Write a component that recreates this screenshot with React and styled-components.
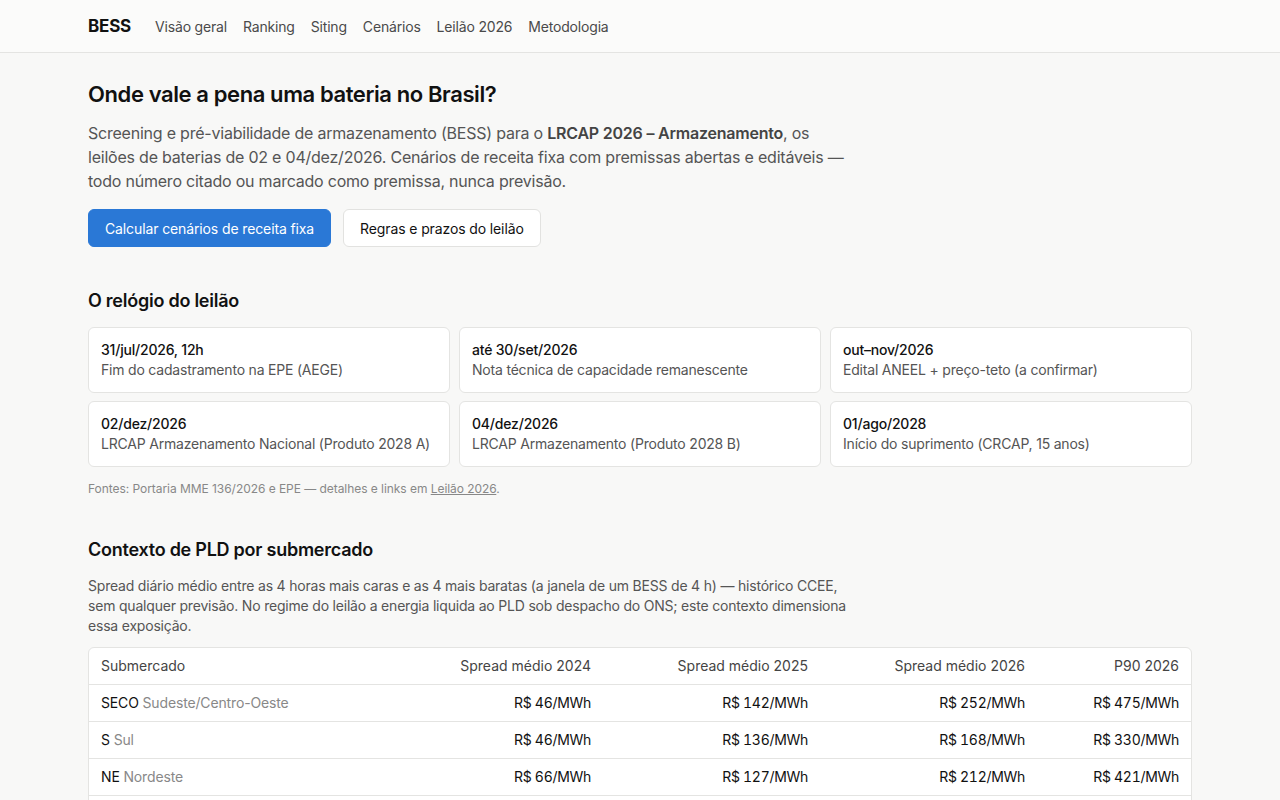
import React from 'react';
import styled, { createGlobalStyle } from 'styled-components';

const GlobalStyle = createGlobalStyle`
  * { box-sizing: border-box; }
  body {
    margin: 0;
    background: #f8f8f7;
    font-family: Inter, "Noto Sans", sans-serif;
    color: #1a1a1a;
  }
`;

const Header = styled.header`
  height: 53px;
  background: #fbfbfa;
  border-bottom: 1px solid #e4e4e2;
`;

const HeaderInner = styled.nav`
  max-width: 1104px;
  margin: 0 auto;
  height: 100%;
  display: flex;
  align-items: center;
  gap: 16px;
`;

const Brand = styled.a`
  font-size: 17px;
  font-weight: 700;
  color: #111;
  margin-right: 8px;
  letter-spacing: -0.2px;
`;

const NavLink = styled.a`
  font-size: 14px;
  color: #4a4a4a;
  letter-spacing: -0.18px;
`;

const Main = styled.main`
  max-width: 1104px;
  margin: 0 auto;
  padding-top: 27px;
`;

const Title = styled.h1`
  margin: 0;
  font-size: 22px;
  font-weight: 600;
  letter-spacing: -0.4px;
  line-height: 28px;
  color: #111;
`;

const Lead = styled.p`
  margin: 13px 0 0;
  max-width: 762px;
  font-size: 16px;
  line-height: 24px;
  letter-spacing: -0.22px;
  color: #555;

  strong { color: #444; font-weight: 600; }
`;

const Actions = styled.div`
  display: flex;
  gap: 12px;
  margin-top: 16px;
`;

const Button = styled.a`
  display: inline-flex;
  align-items: center;
  height: 38px;
  padding: 0 16px;
  border-radius: 6px;
  font-size: 14px;
  letter-spacing: -0.12px;
  background: ${p => (p.$primary ? '#2a78d6' : '#fff')};
  color: ${p => (p.$primary ? '#fff' : '#111')};
  border: 1px solid ${p => (p.$primary ? '#2a78d6' : '#e2e2e0')};
`;

const SectionTitle = styled.h2`
  margin: ${p => p.$top || '44px'} 0 0;
  font-size: 18px;
  font-weight: 600;
  line-height: 24px;
  letter-spacing: -0.25px;
  color: #111;
`;

const Grid = styled.div`
  display: grid;
  grid-template-columns: repeat(3, 1fr);
  gap: 8px 9px;
  margin-top: 14px;
`;

const Card = styled.div`
  background: #fff;
  border: 1px solid #e4e4e2;
  border-radius: 6px;
  padding: 12px 12px;
`;

const CardDate = styled.div`
  font-size: 14px;
  line-height: 20px;
  font-weight: 500;
  letter-spacing: -0.2px;
  color: #111;
`;

const CardText = styled.div`
  font-size: 14px;
  line-height: 20px;
  letter-spacing: -0.2px;
  color: #555;
  white-space: nowrap;
`;

const Note = styled.p`
  margin: 14px 0 0;
  font-size: 12px;
  line-height: 16px;
  letter-spacing: -0.05px;
  color: #888;

  a { color: #888; text-decoration: underline; }
`;

const Desc = styled.p`
  margin: 14px 0 0;
  max-width: 770px;
  font-size: 14px;
  line-height: 20px;
  letter-spacing: -0.2px;
  color: #555;
`;

const TableWrap = styled.div`
  margin-top: 11px;
  background: #fff;
  border: 1px solid #e4e4e2;
  border-radius: 6px;
  overflow: hidden;
`;

const Table = styled.table`
  width: 100%;
  border-collapse: collapse;
  font-size: 14px;
  table-layout: fixed;
`;

const Th = styled.th`
  height: 36px;
  padding: 0 12px;
  font-weight: 400;
  color: #444;
  text-align: ${p => p.$align || 'right'};
  width: ${p => p.$w || 'auto'};
  border-bottom: 1px solid #e4e4e2;
`;

const Td = styled.td`
  height: 37px;
  padding: 0 12px;
  color: #111;
  text-align: ${p => (p.$name ? 'left' : 'right')};
  letter-spacing: ${p => (p.$name ? '-0.15px' : '-0.3px')};
  font-variant-numeric: ${p => (p.$name ? 'normal' : 'tabular-nums')};
  border-bottom: 1px solid #e4e4e2;
`;

const Region = styled.span`
  color: #888;
`;

const clock = [
  ['31/jul/2026, 12h', 'Fim do cadastramento na EPE (AEGE)'],
  ['até 30/set/2026', 'Nota técnica de capacidade remanescente'],
  ['out–nov/2026', 'Edital ANEEL + preço-teto (a confirmar)'],
  ['02/dez/2026', 'LRCAP Armazenamento Nacional (Produto 2028 A)'],
  ['04/dez/2026', 'LRCAP Armazenamento (Produto 2028 B)'],
  ['01/ago/2028', 'Início do suprimento (CRCAP, 15 anos)'],
];

const rows = [
  ['SECO', 'Sudeste/Centro-Oeste', 46, 142, 252, 475],
  ['S', 'Sul', 46, 136, 168, 330],
  ['NE', 'Nordeste', 66, 127, 212, 421],
  ['N', 'Norte', 44, 121, 190, 398],
];

export default function App() {
  return (
    <>
      <GlobalStyle />
      <Header>
        <HeaderInner>
          <Brand>BESS</Brand>
          {['Visão geral', 'Ranking', 'Siting', 'Cenários', 'Leilão 2026', 'Metodologia'].map(l => (
            <NavLink key={l}>{l}</NavLink>
          ))}
        </HeaderInner>
      </Header>
      <Main>
        <Title>Onde vale a pena uma bateria no Brasil?</Title>
        <Lead>
          Screening e pré-viabilidade de armazenamento (BESS) para o <strong>LRCAP 2026 – Armazenamento</strong>, os
          leilões de baterias de 02 e 04/dez/2026. Cenários de receita fixa com premissas abertas e editáveis —
          todo número citado ou marcado como premissa, nunca previsão.
        </Lead>
        <Actions>
          <Button $primary>Calcular cenários de receita fixa</Button>
          <Button>Regras e prazos do leilão</Button>
        </Actions>

        <SectionTitle $top="42px">O relógio do leilão</SectionTitle>
        <Grid>
          {clock.map(([d, t]) => (
            <Card key={d}>
              <CardDate>{d}</CardDate>
              <CardText>{t}</CardText>
            </Card>
          ))}
        </Grid>
        <Note>
          Fontes: Portaria MME 136/2026 e EPE — detalhes e links em <a>Leilão 2026</a>.
        </Note>

        <SectionTitle $top="41px">Contexto de PLD por submercado</SectionTitle>
        <Desc>
          Spread diário médio entre as 4 horas mais caras e as 4 mais baratas (a janela de um BESS de 4 h) — histórico CCEE,
          sem qualquer previsão. No regime do leilão a energia liquida ao PLD sob despacho do ONS; este contexto dimensiona
          essa exposição.
        </Desc>
        <TableWrap>
          <Table>
            <thead>
              <tr>
                <Th $align="left">Submercado</Th>
                <Th $w="217px">Spread médio 2024</Th>
                <Th $w="217px">Spread médio 2025</Th>
                <Th $w="217px">Spread médio 2026</Th>
                <Th $w="154px">P90 2026</Th>
              </tr>
            </thead>
            <tbody>
              {rows.map(([code, name, a, b, c, d]) => (
                <tr key={code}>
                  <Td $name>
                    {code} <Region>{name}</Region>
                  </Td>
                  <Td>R$ {a}/MWh</Td>
                  <Td>R$ {b}/MWh</Td>
                  <Td>R$ {c}/MWh</Td>
                  <Td>R$ {d}/MWh</Td>
                </tr>
              ))}
            </tbody>
          </Table>
        </TableWrap>
      </Main>
    </>
  );
}
